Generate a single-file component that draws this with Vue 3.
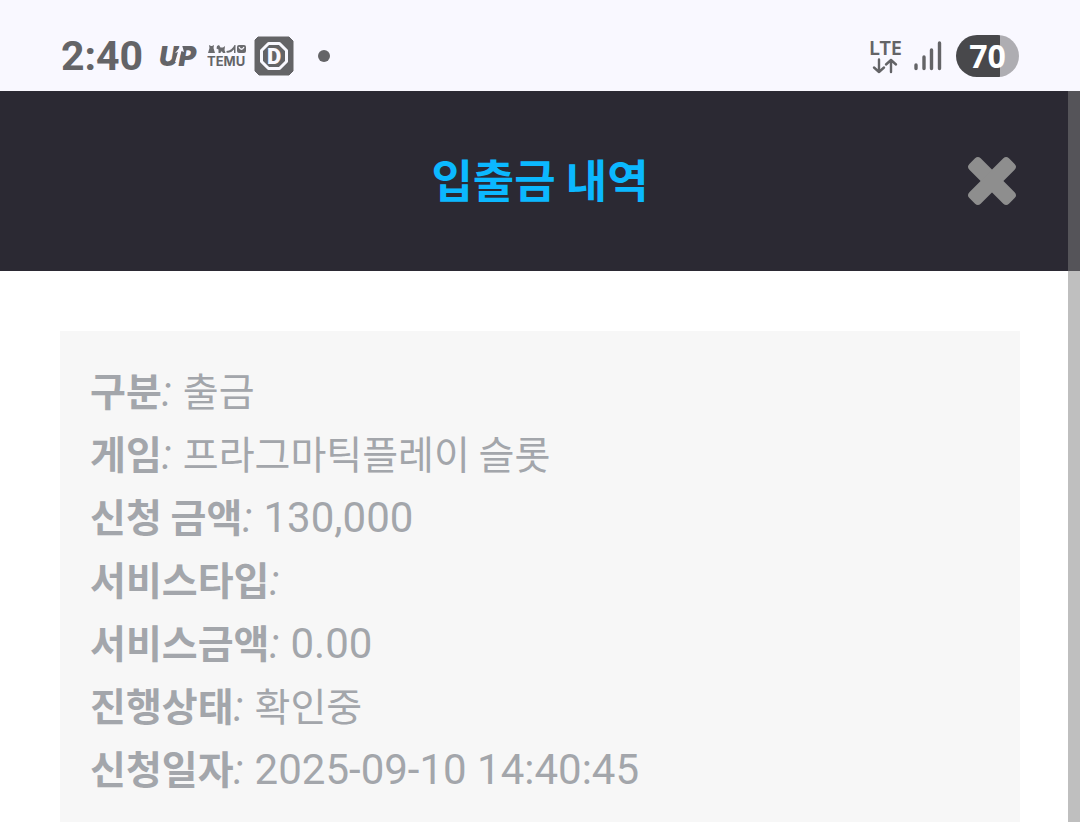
<script setup>
const title = '입출금 내역'

const rows = [
  { label: '구분', value: '출금', hangul: true },
  { label: '게임', value: '프라그마틱플레이 슬롯', hangul: true },
  { label: '신청 금액', value: '130,000' },
  { label: '서비스타입', value: '' },
  { label: '서비스금액', value: '0.00' },
  { label: '진행상태', value: '확인중', hangul: true },
  { label: '신청일자', value: '2025-09-10 14:40:45' },
]
</script>

<template>
  <div class="page">
    <div class="status">
      <div class="group left">
        <time class="clock">2:40</time>
        <svg class="up" width="44" height="32" viewBox="0 0 44 32" aria-label="UP">
          <text class="up-text" x="0" y="26">UP</text>
          <path d="M16 22 L19 12 L16 13 L23 5 L25 12 L22.500 11 L19 22 Z" fill="#f9f8ff" />
        </svg>
        <svg class="temu" width="44" height="32" viewBox="0 0 44 32" aria-label="TEMU">
          <g fill="#6b6b6f">
            <path d="M2 5 L4 6 H5 L7 5 L6.500 8 L8 13 H1 L2.500 8 Z" />
            <path d="M10 6 L12 5 L13.500 7.500 H16 L18 6 L17.500 10 L18.500 13 H16 L15 11.500 H14 L13.500 13 H11.500 L11.500 9.500 L9.500 8.500 Z" />
            <path d="M19.500 11 Q25 10.500 27.500 5 L28.500 5 L28.500 13 H27 V9.500 Q24 13.500 19.500 12.500 Z" />
            <rect x="30" y="5" width="9" height="8" rx="2" />
          </g>
          <path d="M32 7 Q34.500 11.500 37 7" fill="none" stroke="#f9f8ff" stroke-width="1.300" />
          <text class="temu-text" x="0" y="26">TEMU</text>
        </svg>
        <svg class="dapp" width="40" height="40" viewBox="0 0 40 40" aria-label="D">
          <path d="M4 1 H35 L39 5 V35 L35 39 H5 L1 35 V4 Z" fill="#646467" stroke="#646467" stroke-width="1" stroke-linejoin="round" />
          <path d="M14.500 7.500 H25.500 L32.500 14.500 V25.500 L25.500 32.500 H14.500 L7.500 25.500 V14.500 Z" fill="none" stroke="#f9f8ff" stroke-width="3" stroke-linejoin="round" />
          <text class="d-text" x="20" y="28" text-anchor="middle">D</text>
        </svg>
        <span class="dot"></span>
      </div>
      <div class="group right">
        <div class="network">
          <span class="lte">LTE</span>
          <svg width="26" height="16" viewBox="0 0 26 16" fill="none" stroke="#646467" stroke-width="2.400" stroke-linecap="round" stroke-linejoin="round" aria-hidden="true">
            <path d="M7 1.500 V14 M2 9.500 L7 14 L12 9.500" />
            <path d="M19 14 V2 M14 6.500 L19 2 L24 6.500" />
          </svg>
        </div>
        <svg class="signal" width="28" height="30" viewBox="0 0 28 30" stroke="#646467" stroke-width="3.400" stroke-linecap="round" aria-hidden="true">
          <path d="M2 24 V27.500 M10 16 V27.500 M17.500 9 V27.500 M25.500 2 V27.500" />
        </svg>
        <div class="battery">70</div>
      </div>
    </div>

    <main class="view">
      <header class="bar">
        <h1 class="title">{{ title }}</h1>
        <button class="close" type="button" aria-label="닫기">
          <svg width="50" height="50" viewBox="0 0 50 50" fill="#8e8e8e" aria-hidden="true">
            <g transform="rotate(45 25 25)">
              <rect x="-3" y="17" width="56" height="16" rx="4" />
              <rect x="17" y="-3" width="16" height="56" rx="4" />
            </g>
          </svg>
        </button>
      </header>

      <dl class="details">
        <div v-for="row in rows" :key="row.label" class="row">
          <dt><span class="hangul">{{ row.label }}</span><i>:</i></dt>
          <dd :class="{ hangul: row.hangul }">{{ row.value }}</dd>
        </div>
      </dl>
      <div class="scrollbar"></div>
    </main>
  </div>
</template>

<style>
body {
  background: #fff;
}
</style>

<style scoped>
.page {
  display: flex;
  flex-direction: column;
  height: 100vh;
  overflow: hidden;
  font-family: Roboto, "Noto Sans CJK KR", sans-serif;
}
.status {
  display: flex;
  flex: none;
  align-items: center;
  justify-content: space-between;
  box-sizing: border-box;
  height: 91px;
  padding: 21px 61px 0;
  background: #f9f8ff;
  color: #646467;
}
.group {
  display: flex;
  align-items: center;
}
.clock {
  margin-right: 16px;
  font: 700 41px/56px Roboto, sans-serif;
}
.up {
  margin-right: 4px;
}
.up-text {
  font: italic 900 27px Inter, sans-serif;
  fill: #646468;
}
.temu {
  margin-right: 3px;
}
.temu-text {
  font: 700 13px Inter, sans-serif;
  fill: #646468;
}
.d-text {
  font: 900 22px Roboto, sans-serif;
  fill: #f9f8ff;
}
.dot {
  width: 12px;
  height: 12px;
  margin-left: 24px;
  border-radius: 50%;
  background: #646467;
}
.network {
  display: flex;
  flex-direction: column;
  align-items: center;
  margin-right: 12px;
}
.lte {
  font: 600 20px/20px "Noto Sans", sans-serif;
}
.signal {
  margin-right: 14px;
}
.battery {
  width: 63px;
  height: 42px;
  border-radius: 21px;
  background: linear-gradient(to right, #48484b 70%, #aeadb2 70%);
  color: #fff;
  font: 700 32px/42px "Noto Sans", sans-serif;
  text-align: center;
}
.view {
  position: relative;
  flex: 1;
  background: #fff;
}
.bar {
  display: grid;
  grid-template-columns: 1fr auto 1fr;
  align-items: center;
  height: 180px;
  padding: 0 63px;
  background: #2b2933;
}
.title {
  grid-column: 2;
  margin: 0;
  padding-bottom: 4px;
  color: #0bb8ff;
  font: 700 45px/60px "Noto Sans CJK KR", sans-serif;
}
.close {
  justify-self: end;
  display: flex;
  padding: 0;
  border: 0;
  background: none;
}
.details {
  margin: 60px 60px 0;
  padding: 30px;
  background: #f7f7f7;
  color: #a3a6ab;
  font-size: 42px;
  line-height: 61px;
}
.row {
  display: flex;
  gap: 11px;
  height: 63px;
}
dt,
dd {
  margin: 0;
  white-space: nowrap;
}
dt {
  display: flex;
}
.hangul {
  font-family: "Noto Sans CJK KR", sans-serif;
  font-size: 39px;
  line-height: 57px;
}
dt .hangul {
  font-weight: 700;
}
.scrollbar {
  position: absolute;
  top: 0;
  right: 0;
  bottom: 0;
  width: 12px;
  background: rgba(128, 128, 128, 0.5);
}
</style>
